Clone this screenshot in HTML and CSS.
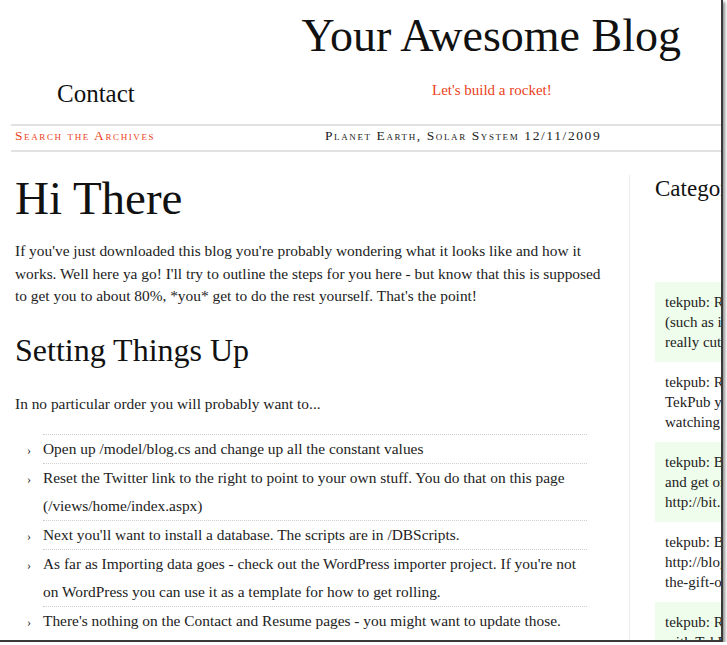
FILE: index.html
```html
<!DOCTYPE html>
<html>
<head>
<meta charset="utf-8">
<title>Your Awesome Blog</title>
<link rel="stylesheet" href="styles.css">
</head>
<body>
<div class="frame">
  <header class="masthead">
    <h1 class="site-title">Your Awesome Blog</h1>
    <div class="nav-row">
      <a class="nav-link" href="#">Contact</a>
      <p class="tagline">Let's build a rocket!</p>
    </div>
  </header>
  <div class="strip">
    <a class="archives" href="#">Search the Archives</a>
    <span class="dateline">Planet Earth, Solar System 12/11/2009</span>
  </div>
  <div class="layout">
    <main class="content">
      <h2 class="post-title">Hi There</h2>
      <p class="para">If you've just downloaded this blog you're probably wondering what it looks like and how it works. Well here ya go! I'll try to outline the steps for you here - but know that this is supposed to get you to about 80%, *you* get to do the rest yourself. That's the point!</p>
      <h3 class="section-title">Setting Things Up</h3>
      <p class="para">In no particular order you will probably want to...</p>
      <ul class="steps">
        <li>Open up /model/blog.cs and change up all the constant values</li>
        <li>Reset the Twitter link to the right to point to your own stuff. You do that on this page (/views/home/index.aspx)</li>
        <li>Next you'll want to install a database. The scripts are in /DBScripts.</li>
        <li>As far as Importing data goes - check out the WordPress importer project. If you're not on WordPress you can use it as a template for how to get rolling.</li>
        <li>There's nothing on the Contact and Resume pages - you might want to update those.</li>
      </ul>
    </main>
    <aside class="sidebar">
      <h3 class="side-title">Categories</h3>
      <ul class="tweets">
        <li class="tweet alt">tekpub: RT @robconery Some things<br>(such as it turns out) are<br>really cutting edge</li>
        <li class="tweet">tekpub: RT @shanselman If you have<br>TekPub you should be<br>watching the new series</li>
        <li class="tweet alt">tekpub: Black Friday - sign up<br>and get one month free<br>http://bit.ly/8aZx2</li>
        <li class="tweet">tekpub: Blog post:<br>http://blog.wekeroad.com/<br>the-gift-of-feedback</li>
        <li class="tweet alt">tekpub: RT @jongalloway Learning<br>with TekPub is great</li>
      </ul>
    </aside>
  </div>
</div>
</body>
</html>
```
FILE: styles.css
```css
html, body {
  margin: 0;
  padding: 0;
  background: #fff;
}

body {
  font-family: "Liberation Serif", "Times New Roman", serif;
  color: #222;
}

.frame {
  box-sizing: border-box;
  width: 723px;
  height: 642px;
  overflow: hidden;
  border-right: 2px solid #3a3a3a;
  border-bottom: 2px solid #3a3a3a;
  box-shadow: 2px 2px 3px rgba(0, 0, 0, 0.45);
  background: #fff;
}

.masthead {
  display: flex;
  flex-direction: column;
}

.site-title {
  margin: 13px 0 0;
  padding-right: 40px;
  text-align: right;
  font-size: 46px;
  line-height: 46px;
  font-weight: normal;
  color: #111;
}

.nav-row {
  display: grid;
  grid-template-columns: 432px 1fr;
  padding-top: 20px;
}

.nav-link {
  padding-left: 57px;
  font-size: 25px;
  line-height: 30px;
  color: #111;
  text-decoration: none;
}

.tagline {
  margin: 1px 0 0;
  font-size: 15px;
  line-height: 20px;
  color: #ea3f1c;
}

.strip {
  display: grid;
  grid-template-columns: 314px 1fr;
  margin: 15px 0 0 11px;
  border-top: 2px solid #e2e2e2;
  border-bottom: 2px solid #e2e2e2;
  padding-bottom: 4px;
  font-size: 13.5px;
  line-height: 20px;
  font-variant: small-caps;
  letter-spacing: 1.6px;
}

.archives {
  padding-left: 4px;
  color: #ea3f1c;
  text-decoration: none;
}

.dateline {
  color: #222;
}

.layout {
  display: grid;
  grid-template-columns: 629px 1fr;
  margin-top: 23px;
}

.content {
  padding: 0 19px 0 15px;
}

.post-title {
  margin: 0;
  font-size: 47px;
  line-height: 47px;
  font-weight: normal;
  color: #111;
}

.para {
  margin: 18px 0 0;
  font-size: 15.4px;
  line-height: 22.5px;
}

.section-title {
  margin: 24px 0 0;
  font-size: 32px;
  line-height: 36px;
  font-weight: normal;
  color: #111;
}

.section-title + .para {
  margin-top: 25px;
}

.steps {
  margin: 19px 0 0 28px;
  padding: 0;
  width: 544px;
  list-style: none;
}

.steps li {
  display: list-item;
  list-style-type: "\203A\00a0\00a0\00a0\00a0";
  list-style-position: outside;
  border-top: 1px dotted #cfcfcf;
  font-size: 15.4px;
  line-height: 28px;
}

.steps li::marker {
  font-size: 12px;
}

.sidebar {
  border-left: 1px solid #ececec;
  padding-left: 25px;
  min-height: 600px;
}

.side-title {
  margin: 2px 0 82px;
  font-size: 23px;
  line-height: 23px;
  font-weight: normal;
  color: #111;
  white-space: nowrap;
}

.tweets {
  margin: 0;
  padding: 0;
  list-style: none;
  width: 260px;
}

.tweet {
  padding: 10px;
  font-size: 15px;
  line-height: 20px;
  white-space: nowrap;
}

.tweet.alt {
  background: #effdec;
}
```
